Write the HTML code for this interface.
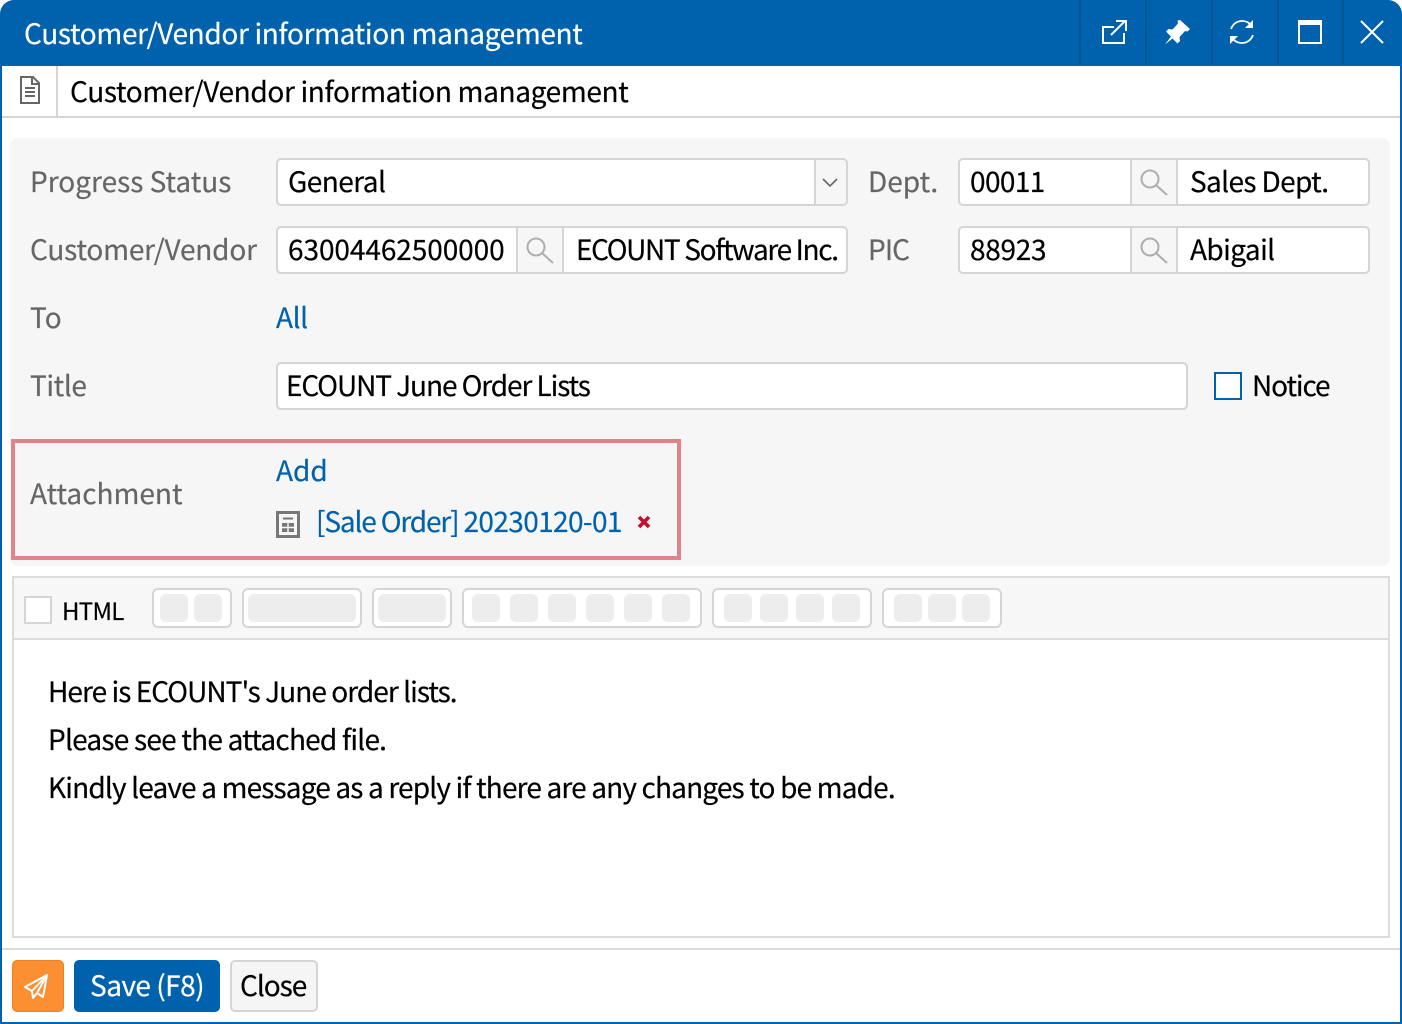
<!DOCTYPE html>
<html lang="en"><head><meta charset="utf-8"><title>Customer/Vendor information management</title>
<style>
*{box-sizing:border-box;margin:0;padding:0}
html,body{width:1402px;height:1024px;overflow:hidden;background:#fff}
body{position:relative;font-family:"Liberation Sans","Noto Sans CJK KR",sans-serif}
.t{position:absolute;white-space:nowrap;font-family:"Noto Sans CJK KR","Liberation Sans",sans-serif;font-size:28px;line-height:40px;height:40px;color:#000;letter-spacing:0;-webkit-text-stroke:.2px currentColor}
.l{color:#666}.b{color:#0062ad}
.box{position:absolute;background:#fff;border:2px solid #d5d5d5;border-radius:5px}
.a{position:absolute}
.g{position:absolute;top:594px;height:28px;background:#ededed;border-radius:6px}
.tg{position:absolute;top:588px;height:40px;background:#fff;border:2px solid #d5d5d5;border-radius:6px}
.sb{position:absolute;width:48px;height:44px;background:#f6f6f6;border-left:2px solid #d5d5d5;border-right:2px solid #d5d5d5}
</style></head><body>
<div class="a" style="left:0;top:0;width:1402px;height:1024px;background:#0062ad;border-radius:14px 14px 0 0"></div>
<div class="a" style="left:2px;top:66px;width:1398px;height:956px;background:#fff"></div>
<div class="t" style="left:24px;top:13px;color:#fff;letter-spacing:-.35px">Customer/Vendor information management</div>
<div class="a" style="left:1079px;top:0;width:2px;height:64px;background:#00578f"></div>
<div class="a" style="left:1145px;top:0;width:2px;height:64px;background:#00578f"></div>
<div class="a" style="left:1211px;top:0;width:2px;height:64px;background:#00578f"></div>
<div class="a" style="left:1277px;top:0;width:2px;height:64px;background:#00578f"></div>
<div class="a" style="left:1342px;top:0;width:2px;height:64px;background:#00578f"></div>
<svg class="a" style="left:1090px;top:10px" width="312" height="44" viewBox="1090 10 312 44" fill="none" stroke="#fff">
<path d="M1114 27h-11v16h21v-10" stroke-width="2"/><path d="M1111 35l14-14M1116 21h10v10" stroke-width="2"/>
<path d="M1180 20l10 9-2.5 2.5-2.5-.5-5.5 6 .5 4-2.5 2.5-5-5-7.5 6 6-8-5-5 2.5-2.5 4 .5 5.5-6-.5-3z" fill="#fff" stroke="none"/>
<path d="M1231 29c2-5 6-8 11-8 3 0 6 1 8 3M1253 35c-2 5-6 8-11 8-3 0-6-1-8-3" stroke-width="1.8"/>
<path d="M1253 20v8h-8z" fill="#fff" stroke="none"/><path d="M1230 44v-8h8z" fill="#fff" stroke="none"/>
<rect x="1299" y="21" width="22" height="22" stroke-width="2"/><rect x="1298" y="20" width="24" height="5" fill="#fff" stroke="none"/>
<path d="M1361 21l22 22M1383 21l-22 22" stroke-width="2"/>
</svg>
<div class="a" style="left:2px;top:116px;width:1398px;height:2px;background:#d5d5d5"></div>
<div class="a" style="left:56px;top:66px;width:2px;height:50px;background:#d5d5d5"></div>
<svg class="a" style="left:18px;top:74px" width="24" height="32" viewBox="0 0 24 32" fill="none" stroke="#666" stroke-width="2"><path d="M3 3h12l6 6v20H3z"/><path d="M14 3v7h7M7 14h10M7 18h10M7 22h10"/></svg>
<div class="t" style="left:70px;top:71px;letter-spacing:-.35px">Customer/Vendor information management</div>

<div class="a" style="left:10px;top:138px;width:1380px;height:428px;background:#f6f6f6;border-radius:8px"></div>
<div class="t l" style="left:30px;top:161px">Progress Status</div>
<div class="t l" style="left:30px;top:229px;letter-spacing:-.2px">Customer/Vendor</div>
<div class="t l" style="left:30px;top:297px">To</div>
<div class="t l" style="left:30px;top:365px;letter-spacing:-.4px">Title</div>
<div class="t l" style="left:868px;top:161px">Dept.</div>
<div class="t l" style="left:868px;top:229px;letter-spacing:-.9px">PIC</div>

<div class="box" style="left:276px;top:158px;width:572px;height:48px"></div>
<div class="a" style="left:814px;top:160px;width:32px;height:44px;background:#f6f6f6;border-left:2px solid #d5d5d5;border-radius:0 4px 4px 0"></div>
<svg class="a" style="left:820px;top:176px" width="20" height="14" fill="none" stroke="#666" stroke-width="1.6"><path d="M3 3l7 7 7-7"/></svg>
<div class="t" style="left:288px;top:161px;letter-spacing:-.55px">General</div>

<div class="box" style="left:958px;top:158px;width:412px;height:48px"></div>
<div class="sb" style="left:1130px;top:160px"></div>
<div class="t" style="left:970px;top:161px;letter-spacing:-.6px">00011</div>
<div class="t" style="left:1190px;top:161px;letter-spacing:-.64px">Sales Dept.</div>

<div class="box" style="left:276px;top:226px;width:572px;height:48px"></div>
<div class="sb" style="left:516px;top:228px"></div>
<div class="t" style="left:288px;top:229px;letter-spacing:-.07px">63004462500000</div>
<div class="t" style="left:576px;top:229px;letter-spacing:-1.35px">ECOUNT Software Inc.</div>

<div class="box" style="left:958px;top:226px;width:412px;height:48px"></div>
<div class="sb" style="left:1130px;top:228px"></div>
<div class="t" style="left:970px;top:229px;letter-spacing:-.3px">88923</div>
<div class="t" style="left:1190px;top:229px;letter-spacing:-.6px">Abigail</div>

<svg class="a" style="left:0;top:0" width="1402" height="300" fill="none" stroke="#aeaeae" stroke-width="2">
<circle cx="1150" cy="179" r="8.5"/><path d="M1156 185l11 10"/>
<circle cx="1150" cy="247" r="8.5"/><path d="M1156 253l11 10"/>
<circle cx="536" cy="247" r="8.5"/><path d="M542 253l11 10"/>
</svg>

<div class="t b" style="left:276px;top:297px;letter-spacing:-.4px">All</div>
<div class="box" style="left:276px;top:362px;width:912px;height:48px"></div>
<div class="t" style="left:286px;top:365px;letter-spacing:-1.08px">ECOUNT June Order Lists</div>
<div class="a" style="left:1214px;top:372px;width:28px;height:28px;background:#fff;border:2px solid #0062ad"></div>
<div class="t" style="left:1252px;top:365px;letter-spacing:-1.1px">Notice</div>

<div class="a" style="left:11px;top:439px;width:670px;height:121px;border:4px solid #e0848b"></div>
<div class="t l" style="left:30px;top:473px">Attachment</div>
<div class="t b" style="left:276px;top:450px">Add</div>
<svg class="a" style="left:276px;top:511px" width="24" height="28" fill="none"><rect x="1.5" y="1.5" width="21" height="24" fill="#f6f6f6" stroke="#777" stroke-width="3"/><path d="M7 7.5h10" stroke="#777" stroke-width="2"/><path d="M6 12h12v9H6z" fill="#777"/><path d="M12 12v9M6 16.5h12" stroke="#f6f6f6" stroke-width="1.4"/></svg>
<div class="t b" style="left:316px;top:501px;letter-spacing:-1.15px">[Sale Order] <span style="letter-spacing:-.62px">20230120-01</span></div>
<svg class="a" style="left:637px;top:515px" width="14" height="14" fill="none" stroke="#c8102e" stroke-width="3.6"><path d="M2 2l10 10M12 2L2 12"/></svg>

<div class="a" style="left:12px;top:576px;width:1378px;height:362px;border:2px solid #dcdcdc;background:#fff"></div>
<div class="a" style="left:14px;top:578px;width:1374px;height:62px;background:#f7f7f7;border-bottom:2px solid #dcdcdc"></div>
<div class="a" style="left:24px;top:596px;width:28px;height:28px;background:#fff;border:2px solid #d5d5d5"></div>
<div class="t" style="left:62px;top:590px;font-size:24px;letter-spacing:-.7px">HTML</div>
<div class="tg" style="left:152px;width:80px"></div><div class="g" style="left:160px;width:28px"></div><div class="g" style="left:194px;width:28px"></div>
<div class="tg" style="left:242px;width:120px"></div><div class="g" style="left:248px;width:108px"></div>
<div class="tg" style="left:372px;width:80px"></div><div class="g" style="left:378px;width:68px"></div>
<div class="tg" style="left:462px;width:240px"></div><div class="g" style="left:472px;width:28px"></div><div class="g" style="left:510px;width:28px"></div><div class="g" style="left:548px;width:28px"></div><div class="g" style="left:586px;width:28px"></div><div class="g" style="left:624px;width:28px"></div><div class="g" style="left:662px;width:28px"></div>
<div class="tg" style="left:712px;width:160px"></div><div class="g" style="left:724px;width:28px"></div><div class="g" style="left:760px;width:28px"></div><div class="g" style="left:796px;width:28px"></div><div class="g" style="left:832px;width:28px"></div>
<div class="tg" style="left:882px;width:120px"></div><div class="g" style="left:894px;width:28px"></div><div class="g" style="left:928px;width:28px"></div><div class="g" style="left:962px;width:28px"></div>

<div class="t" style="left:48px;top:671px;letter-spacing:-.95px">Here is ECOUNT's June order lists.</div>
<div class="t" style="left:48px;top:719px;letter-spacing:-.77px">Please see the attached file.</div>
<div class="t" style="left:48px;top:767px;letter-spacing:-.84px">Kindly leave a message as a reply if there are any changes to be made.</div>

<div class="a" style="left:2px;top:948px;width:1398px;height:2px;background:#dcdcdc"></div>
<div class="a" style="left:12px;top:960px;width:52px;height:52px;background:#fd8f33;border:1px solid #f08020;border-radius:5px"></div>
<svg class="a" style="left:22px;top:972px" width="30" height="30" fill="none" stroke="#fff" stroke-width="2" stroke-linejoin="round"><path d="M25 3L3 15l7 4 15-16-10 18 6 4z"/><path d="M10 19l1 7 4-5"/></svg>
<div class="a" style="left:74px;top:960px;width:146px;height:52px;background:#0062ad;border-radius:5px"></div>
<div class="t" style="left:90px;top:965px;color:#fff;letter-spacing:-.5px">Save (F8)</div>
<div class="a" style="left:230px;top:960px;width:88px;height:52px;background:#f5f5f5;border:2px solid #d5d5d5;border-radius:5px"></div>
<div class="t" style="left:240px;top:965px;letter-spacing:-1.05px">Close</div>
</body></html>
